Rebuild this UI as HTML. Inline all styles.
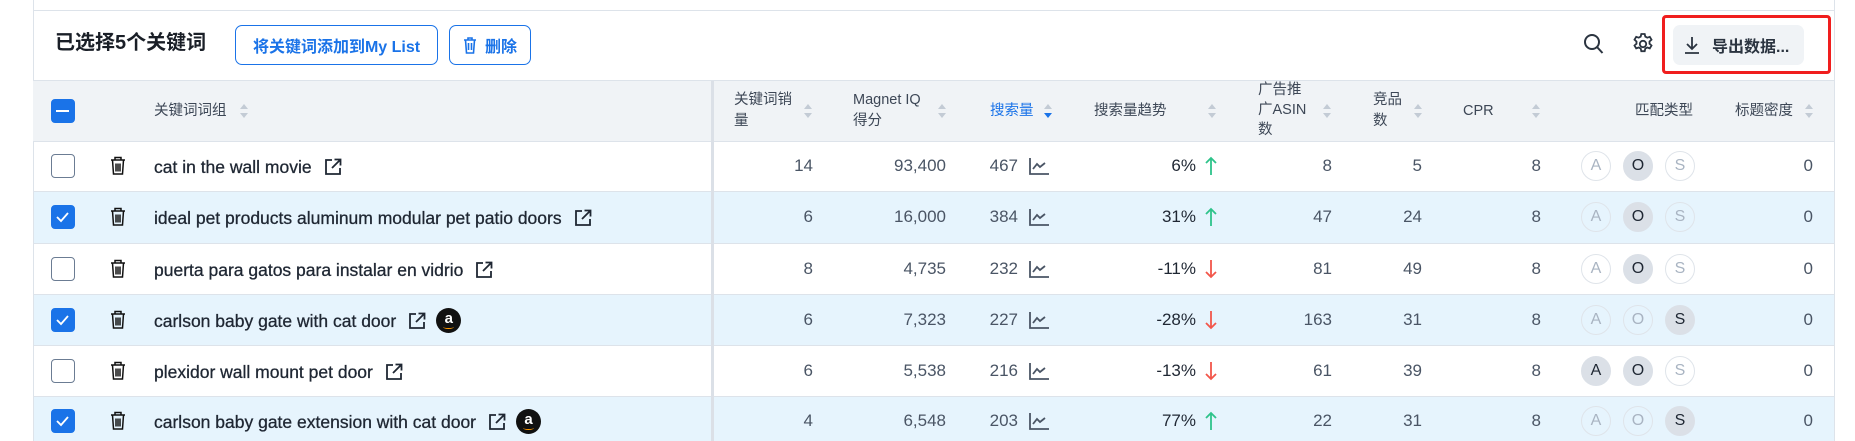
<!DOCTYPE html>
<html style="overflow:hidden;width:1855px;height:441px"><head><meta charset="utf-8"><style>
*{box-sizing:border-box;margin:0;padding:0}
body{width:1855px;height:441px;overflow:hidden;background:#fff;position:relative;font-family:"Liberation Sans","Noto Sans CJK SC",sans-serif;color:#1f2733}
.a{position:absolute}
.hl{position:absolute;left:33px;width:1802px;height:1px;background:#dde3ea}
.cb{position:absolute;left:51px;width:24px;height:24px;border:1.5px solid #6b7c93;border-radius:4px;background:#fff}
.cb.on{background:#1a73e8;border-color:#1a73e8}
.hd{position:absolute;font-size:14.5px;color:#3d4756;line-height:21px}
.srt{position:absolute;width:10px;height:18px}
.num{position:absolute;font-size:17px;color:#4a5565;text-align:right;width:100px;line-height:20px}
.kw{position:absolute;left:154px;font-size:17.5px;color:#1f2733;line-height:20px;display:flex;align-items:center;white-space:nowrap;-webkit-text-stroke:0.3px #1f2733}
.kw svg{margin-left:12px}
.amz{margin-left:10px;width:25px;height:25px;border-radius:50%;background:#111;color:#fff;font-weight:bold;font-size:15px;display:flex;align-items:center;justify-content:center;-webkit-text-stroke:0;position:relative;padding-bottom:3px}
.amz:after{content:"";position:absolute;left:7px;bottom:4px;width:11px;height:3px;border-bottom:1.5px solid #f90;border-radius:0 0 50% 50%}
.c{position:absolute;width:30px;height:30px;border-radius:50%;border:1px solid #dfe4ea;color:#a9b4c2;font-size:16px;display:flex;align-items:center;justify-content:center}
.c.on{background:#dbe0e7;border-color:#dbe0e7;color:#1f2733}
</style></head><body>
<div class="a" style="left:33px;top:0;width:1px;height:441px;background:#dde3ea"></div>
<div class="a" style="left:1834px;top:0;width:1px;height:441px;background:#dde3ea"></div>
<div class="a" style="left:33px;top:10px;width:1802px;height:1px;background:#dde3ea"></div>

<div class="a" style="left:55px;top:31px;font-size:20px;font-weight:bold;line-height:24px;color:#1a1f27">已选择5个关键词</div>
<div class="a" style="left:235px;top:25px;width:203px;height:40px;border:1.5px solid #1a73e8;border-radius:7px;color:#1a73e8;font-size:16px;font-weight:bold;display:flex;align-items:center;justify-content:center">将关键词添加到My List</div>
<div class="a" style="left:449px;top:25px;width:82px;height:40px;border:1.5px solid #1a73e8;border-radius:7px;color:#1a73e8;font-size:16px;font-weight:bold;display:flex;align-items:center;justify-content:center;gap:8px"><svg width="14" height="18" viewBox="0 0 14 18" fill="none" stroke="#1a73e8" stroke-width="1.6"><path d="M1 4h12M5 4V2h4v2M2.5 4l1 13h7l1-13M5.5 7v7M8.5 7v7"/></svg>删除</div>

<svg class="a" style="left:1583px;top:33px" width="21" height="22" viewBox="0 0 21 22" fill="none" stroke="#2b3440" stroke-width="2"><circle cx="9" cy="9" r="7"/><path d="M14 14l5.5 6"/></svg>
<svg class="a" style="left:1631px;top:32px" width="24" height="24" viewBox="0 0 24 24" fill="none" stroke="#2b3440" stroke-width="1.8"><circle cx="12" cy="12" r="3.2"/><path d="M10.3 2h3.4l.6 2.6 2 1.1 2.5-.9 1.7 2.9-2 1.8v2.2l2 1.8-1.7 2.9-2.5-.9-2 1.1-.6 2.6h-3.4l-.6-2.6-2-1.1-2.5.9-1.7-2.9 2-1.8V9.5l-2-1.8 1.7-2.9 2.5.9 2-1.1z"/></svg>
<div class="a" style="left:1662px;top:15px;width:169px;height:59px;border:3px solid #f01e1e;border-radius:4px"></div>
<div class="a" style="left:1673px;top:25px;width:131px;height:40px;background:#f0f3f6;border-radius:7px;display:flex;align-items:center;padding-left:11px;font-size:16px;font-weight:bold;color:#2b3440"><svg width="16" height="18" viewBox="0 0 16 18" fill="none" stroke="#2b3440" stroke-width="1.8" style="margin-right:12px"><path d="M8 1v12M3 8l5 5 5-5M1 17h14"/></svg>导出数据...</div>

<div class="a" style="left:33px;top:81px;width:1801px;height:60px;background:#f0f3f6"></div>
<div class="hl" style="top:80px"></div>
<div class="cb on" style="top:99px"><div class="a" style="left:4px;top:9.5px;width:13px;height:2.5px;background:#fff"></div></div>
<div class="hd" style="left:154px;top:101px">关键词词组</div>
<svg class="srt" style="left:239px;top:102px" viewBox="0 0 10 18"><path d="M1 7l4-5 4 5z" fill="#c3cbd5"/><path d="M1 11l4 5 4-5z" fill="#c3cbd5"/></svg>
<div class="hd" style="left:734px;top:90px;width:60px">关键词销<br>量</div>
<svg class="srt" style="left:803px;top:102px" viewBox="0 0 10 18"><path d="M1 7l4-5 4 5z" fill="#c3cbd5"/><path d="M1 11l4 5 4-5z" fill="#c3cbd5"/></svg>
<div class="hd" style="left:853px;top:90px">Magnet IQ<br>得分</div>
<svg class="srt" style="left:937px;top:102px" viewBox="0 0 10 18"><path d="M1 7l4-5 4 5z" fill="#c3cbd5"/><path d="M1 11l4 5 4-5z" fill="#c3cbd5"/></svg>
<div class="hd" style="left:990px;top:101px;color:#1a73e8">搜索量</div>
<svg class="srt" style="left:1043px;top:102px" viewBox="0 0 10 18"><path d="M1 7l4-5 4 5z" fill="#c3cbd5"/><path d="M1 11l4 5 4-5z" fill="#1a73e8"/></svg>
<div class="hd" style="left:1094px;top:101px">搜索量趋势</div>
<svg class="srt" style="left:1207px;top:102px" viewBox="0 0 10 18"><path d="M1 7l4-5 4 5z" fill="#c3cbd5"/><path d="M1 11l4 5 4-5z" fill="#c3cbd5"/></svg>
<div class="hd" style="left:1258px;top:80px;line-height:20px">广告推<br>广ASIN<br>数</div>
<svg class="srt" style="left:1322px;top:102px" viewBox="0 0 10 18"><path d="M1 7l4-5 4 5z" fill="#c3cbd5"/><path d="M1 11l4 5 4-5z" fill="#c3cbd5"/></svg>
<div class="hd" style="left:1373px;top:90px">竞品<br>数</div>
<svg class="srt" style="left:1413px;top:102px" viewBox="0 0 10 18"><path d="M1 7l4-5 4 5z" fill="#c3cbd5"/><path d="M1 11l4 5 4-5z" fill="#c3cbd5"/></svg>
<div class="hd" style="left:1463px;top:101px">CPR</div>
<svg class="srt" style="left:1531px;top:102px" viewBox="0 0 10 18"><path d="M1 7l4-5 4 5z" fill="#c3cbd5"/><path d="M1 11l4 5 4-5z" fill="#c3cbd5"/></svg>
<div class="hd" style="left:1635px;top:101px">匹配类型</div>
<div class="hd" style="left:1735px;top:101px">标题密度</div>
<svg class="srt" style="left:1804px;top:102px" viewBox="0 0 10 18"><path d="M1 7l4-5 4 5z" fill="#c3cbd5"/><path d="M1 11l4 5 4-5z" fill="#c3cbd5"/></svg>

<div class="a" style="left:34px;top:192px;width:1800px;height:51px;background:#e6f4fd"></div>
<div class="a" style="left:34px;top:295px;width:1800px;height:51px;background:#e6f4fd"></div>
<div class="a" style="left:34px;top:397px;width:1800px;height:44px;background:#e6f4fd"></div>
<div class="hl" style="top:141px"></div>
<div class="hl" style="top:191px"></div>
<div class="hl" style="top:243px"></div>
<div class="hl" style="top:294px"></div>
<div class="hl" style="top:345px"></div>
<div class="hl" style="top:396px"></div>
<div class="a" style="left:711px;top:81px;width:3px;height:360px;background:#dbe0e7"></div>

<svg width="0" height="0" style="position:absolute"><defs>
<symbol id="tr" viewBox="0 0 18 20"><path d="M2 4.5h14M6 4.5V2h6v2.5M3.5 4.5l1 14h9l1-14M7 8v8M9 8v8M11 8v8" fill="none" stroke="#111" stroke-width="1.5"/></symbol>
<symbol id="ex" viewBox="0 0 18 18"><path d="M8 2H2v14h14v-6M10.5 1.5h6v6M16.5 1.5L8 10" fill="none" stroke="#1f2733" stroke-width="1.8"/></symbol>
<symbol id="ch" viewBox="0 0 20 18"><path d="M1 1v16h19M4 12l4-5 3 3 5-4" fill="none" stroke="#4a5565" stroke-width="1.8"/></symbol>
<symbol id="up" viewBox="0 0 12 20"><path d="M6 19V2M1 7l5-5 5 5" fill="none" stroke="#2ec38a" stroke-width="1.8"/></symbol>
<symbol id="dn" viewBox="0 0 12 20"><path d="M6 1v17M1 13l5 5 5-5" fill="none" stroke="#f2564a" stroke-width="1.8"/></symbol>
</defs></svg>

<div id="rows"></div>
<script>
var R=[
[166,0,"cat in the wall movie",0,"14","93,400","467","6%",1,"8","5","8",[0,1,0]],
[217,1,"ideal pet products aluminum modular pet patio doors",0,"6","16,000","384","31%",1,"47","24","8",[0,1,0]],
[269,0,"puerta para gatos para instalar en vidrio",0,"8","4,735","232","-11%",0,"81","49","8",[0,1,0]],
[320,1,"carlson baby gate with cat door",1,"6","7,323","227","-28%",0,"163","31","8",[0,0,1]],
[371,0,"plexidor wall mount pet door",0,"6","5,538","216","-13%",0,"61","39","8",[1,1,0]],
[421,1,"carlson baby gate extension with cat door",1,"4","6,548","203","77%",1,"22","31","8",[0,0,1]]];
var h="";
R.forEach(function(r){var y=r[0];
h+='<div class="cb'+(r[1]?' on':'')+'" style="top:'+(y-12)+'px">'+(r[1]?'<svg width="21" height="21" viewBox="0 0 21 21" style="position:absolute;left:0;top:0"><path d="M5 11l4 4 7-8" fill="none" stroke="#fff" stroke-width="1.8"/></svg>':'')+'</div>';
h+='<svg class="a" style="left:109px;top:'+(y-11)+'px" width="18" height="21"><use href="#tr"/></svg>';
h+='<div class="kw" style="top:'+(y-12)+'px;height:25px">'+r[2]+'<svg width="18" height="18"><use href="#ex"/></svg>'+(r[3]?'<span class="amz">a</span>':'')+'</div>';
function n(x,t,c){return '<div class="num" style="left:'+(x-100)+'px;top:'+(y-10)+'px'+(c?';color:'+c:'')+'">'+t+'</div>';}
h+=n(813,r[4])+n(946,r[5])+n(1018,r[6])+n(1196,r[7],'#1f2733')+n(1332,r[9])+n(1422,r[10])+n(1541,r[11])+n(1813,"0");
h+='<svg class="a" style="left:1029px;top:'+(y-9)+'px" width="20" height="18"><use href="#ch"/></svg>';
h+='<svg class="a" style="left:1205px;top:'+(y-10)+'px" width="12" height="20"><use href="#'+(r[8]?'up':'dn')+'"/></svg>';
["A","O","S"].forEach(function(L,i){h+='<div class="c'+(r[12][i]?' on':'')+'" style="left:'+(1581+i*42)+'px;top:'+(y-15)+'px">'+L+'</div>';});
});
document.getElementById("rows").innerHTML=h;
</script>
</body></html>
